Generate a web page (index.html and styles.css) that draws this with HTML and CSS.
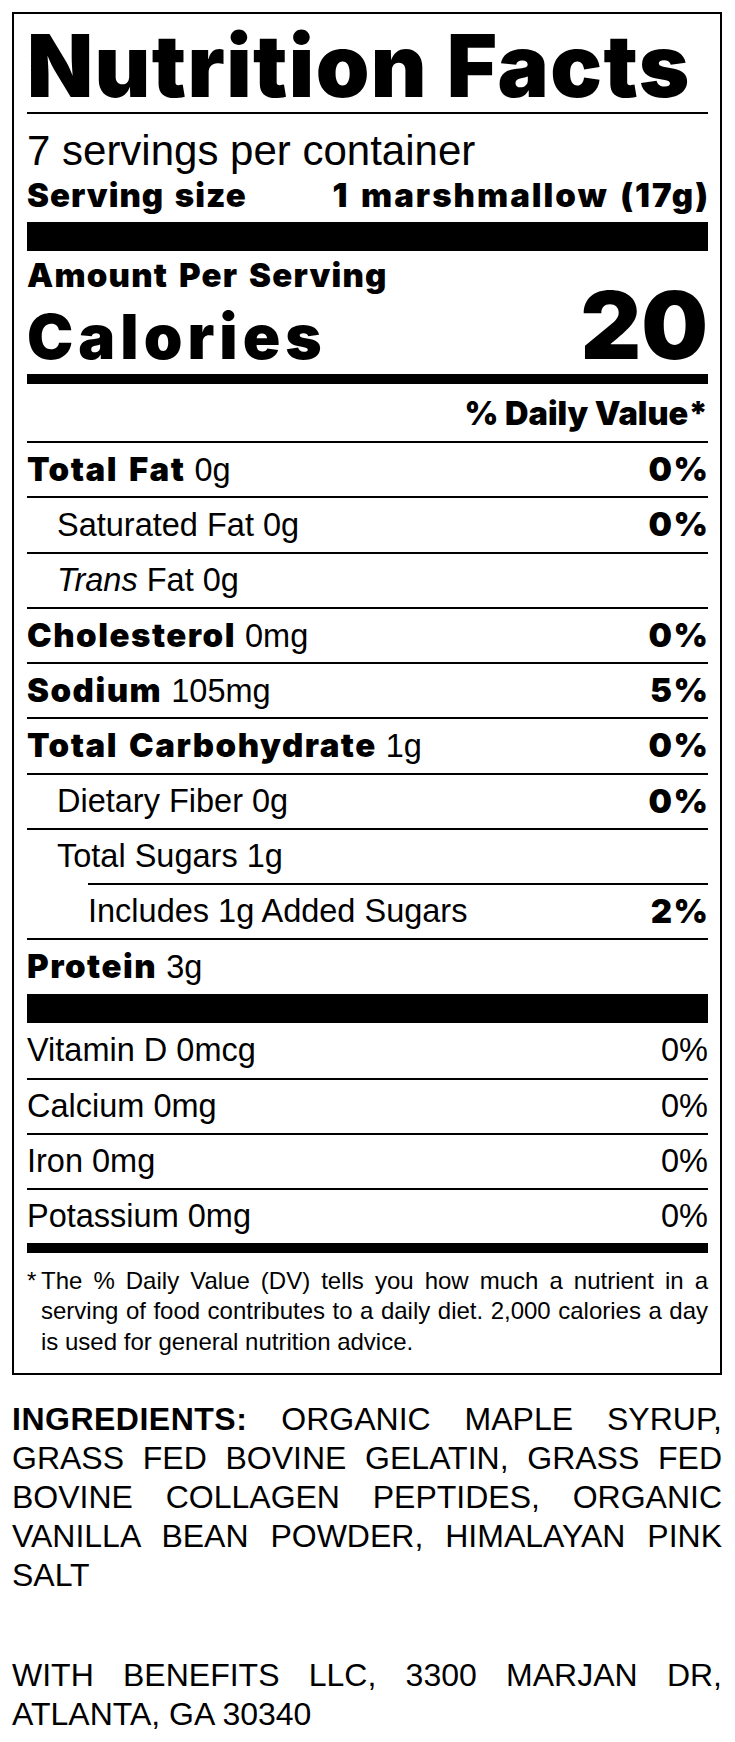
FILE: index.html
```html
<!DOCTYPE html>
<html lang="en">
<head>
<meta charset="utf-8">
<title>Nutrition Facts</title>
<link rel="stylesheet" href="styles.css">
</head>
<body>
<div class="page">
  <section class="label">
    <h1 class="title">Nutrition Facts</h1>
    <div class="servings">
      <div class="per-container">7 servings per container</div>
      <div class="serving-size heavy"><span class="size-label">Serving size</span><span class="size-value">1 marshmallow (17g)</span></div>
    </div>
    <div class="calories">
      <div class="amount heavy">Amount Per Serving</div>
      <div class="cal-row heavy"><span class="cal-label">Calories</span><span class="cal-value">20</span></div>
    </div>
    <div class="dv-head heavy">% Daily Value*</div>
    <div class="row"><span><b class="heavy">Total Fat</b> 0g</span><b class="heavy end">0%</b></div>
    <div class="row indent"><span>Saturated Fat 0g</span><b class="heavy end">0%</b></div>
    <div class="row indent"><span><i>Trans</i> Fat 0g</span></div>
    <div class="row"><span><b class="heavy">Cholesterol</b> 0mg</span><b class="heavy end">0%</b></div>
    <div class="row"><span><b class="heavy">Sodium</b> 105mg</span><b class="heavy end">5%</b></div>
    <div class="row"><span><b class="heavy">Total Carbohydrate</b> 1g</span><b class="heavy end">0%</b></div>
    <div class="row indent"><span>Dietary Fiber 0g</span><b class="heavy end">0%</b></div>
    <div class="row indent"><span>Total Sugars 1g</span></div>
    <div class="row added"><span>Includes 1g Added Sugars</span><b class="heavy end">2%</b></div>
    <div class="row"><span><b class="heavy">Protein</b> 3g</span></div>
    <div class="vitamins">
      <div class="row vit"><span>Vitamin D 0mcg</span><span>0%</span></div>
      <div class="row vit"><span>Calcium 0mg</span><span>0%</span></div>
      <div class="row vit"><span>Iron 0mg</span><span>0%</span></div>
      <div class="row vit"><span>Potassium 0mg</span><span>0%</span></div>
    </div>
    <div class="footnote">
      <span class="star">*</span>
      <p class="fn-text">The % Daily Value (DV) tells you how much a nutrient in a serving of food contributes to a daily diet. 2,000 calories a day is used for general nutrition advice.</p>
    </div>
  </section>
  <p class="ingredients"><b>INGREDIENTS:</b> ORGANIC MAPLE SYRUP, GRASS FED BOVINE GELATIN, GRASS FED BOVINE COLLAGEN PEPTIDES, ORGANIC VANILLA BEAN POWDER, HIMALAYAN PINK SALT</p>
  <p class="address">WITH BENEFITS LLC, 3300 MARJAN DR, ATLANTA, GA 30340</p>
</div>
</body>
</html>
```

FILE: styles.css
```css
* { box-sizing: border-box; margin: 0; padding: 0; }
html, body { background: #fff; }
body { font-family: "Liberation Sans", Arial, sans-serif; color: #000; }

.page { padding: 12px 13px 40px 12px; }

.label { border: 2px solid #000; padding: 0 12px 0 13px; }

.heavy {
  font-family: Inter, "Liberation Sans", sans-serif;
  font-weight: 900;
  letter-spacing: 1.5px;
  word-spacing: 3px;
}
.end { margin-right: -1.5px; }

.title {
  font-family: Inter, "Liberation Sans", sans-serif;
  font-weight: 900;
  font-size: 86px;
  line-height: 88px;
  letter-spacing: 1.4px;
  padding: 8px 0 2px;
  border-bottom: 2px solid #000;
  white-space: nowrap;
}

.servings { padding: 15px 0 7px; border-bottom: 29px solid #000; }
.per-container { font-size: 42px; line-height: 44px; }
.serving-size {
  display: flex; justify-content: space-between;
  font-size: 33px; line-height: 40px; margin-top: 2px;
}
.size-label { letter-spacing: 1px; }
.size-value { letter-spacing: 2px; margin-right: -2px; }

.calories { padding: 6px 0 5px; border-bottom: 10px solid #000; }
.amount { font-size: 33px; line-height: 36px; letter-spacing: 1.2px; }
.cal-row {
  display: flex; justify-content: space-between; align-items: baseline;
  line-height: 64px; letter-spacing: 0;
}
.cal-label { font-size: 62px; letter-spacing: 5px; }
.cal-value { font-size: 94px; }

.dv-head {
  font-size: 32.5px; line-height: 40px; letter-spacing: 0; word-spacing: 0;
  padding: 10px 0 7px; text-align: right;
}

.row {
  display: flex; justify-content: space-between; align-items: center;
  height: 55.25px; border-top: 2px solid #000;
  font-size: 32.5px; line-height: 1;
}
.row b.heavy { font-size: 33px; }
.row.indent { padding-left: 30px; }
.row.added { margin-left: 61px; }

.vitamins { border-top: 29px solid #000; }
.vitamins .row { height: 55px; }
.vitamins .row:first-child { border-top: 0; }

.footnote {
  display: flex;
  border-top: 10px solid #000;
  padding: 13px 0 16px;
  font-size: 24px; line-height: 30.5px;
}
.star { flex: none; width: 14px; }
.fn-text { flex: 1; text-align: justify; }

.ingredients { margin-top: 25px; font-size: 32px; line-height: 39px; text-align: justify; }
.ingredients b { letter-spacing: 0.5px; }
.address { margin-top: 61px; font-size: 32px; line-height: 39px; text-align: justify; }
```
